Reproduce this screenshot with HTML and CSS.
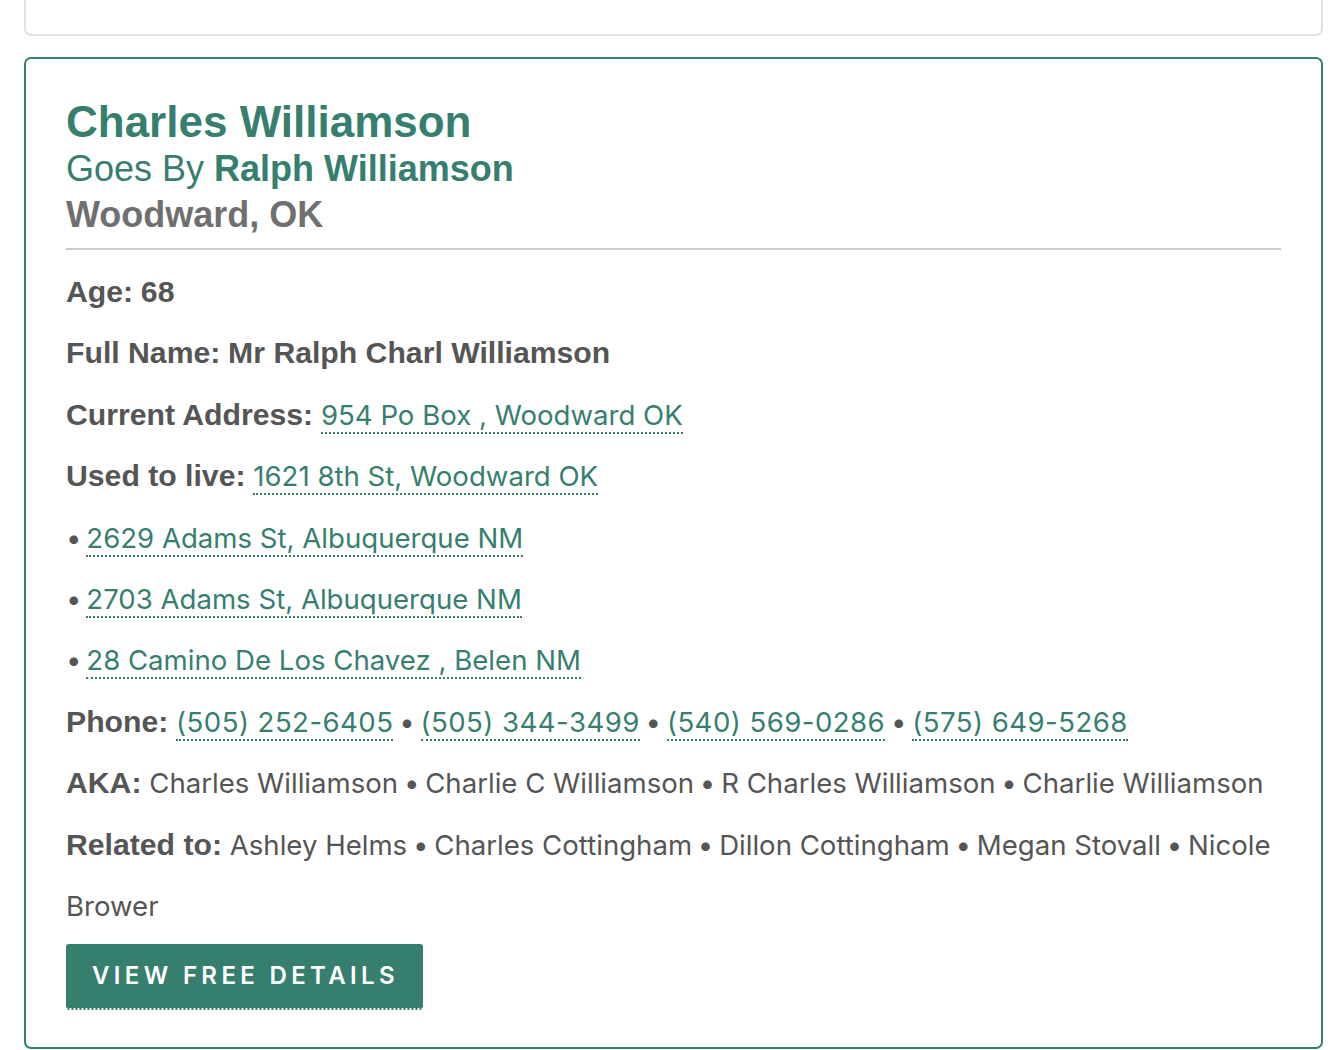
FILE: index.html
```html
<!DOCTYPE html>
<html lang="en">
<head>
<meta charset="utf-8">
<title>Charles Williamson</title>
<link rel="stylesheet" href="styles.css">
</head>
<body>
<div class="page">
  <div class="card card-prev"></div>
  <div class="card card-person">
    <div class="head">
      <h2 class="name">Charles Williamson</h2>
      <div class="goes">Goes By <strong>Ralph Williamson</strong></div>
      <div class="loc">Woodward, OK</div>
    </div>
    <div class="rows">
      <p class="row"><b>Age:</b> <b>68</b></p>
      <p class="row"><b>Full Name:</b> <b>Mr Ralph Charl Williamson</b></p>
      <p class="row"><b>Current Address:</b> <a href="#">954 Po Box , Woodward OK</a></p>
      <p class="row"><b>Used to live:</b> <a href="#">1621 8th St, Woodward OK</a></p>
      <p class="row"><span class="dot">• </span><a href="#">2629 Adams St, Albuquerque NM</a></p>
      <p class="row"><span class="dot">• </span><a href="#">2703 Adams St, Albuquerque NM</a></p>
      <p class="row"><span class="dot">• </span><a href="#">28 Camino De Los Chavez , Belen NM</a></p>
      <p class="row"><b>Phone:</b> <a class="phone" href="#">(505) 252-6405</a><span class="sep"> • </span><a class="phone" href="#">(505) 344-3499</a><span class="sep"> • </span><a class="phone" href="#">(540) 569-0286</a><span class="sep"> • </span><a class="phone" href="#">(575) 649-5268</a></p>
      <p class="row"><b>AKA:</b> Charles Williamson<span class="sep"> • </span>Charlie C Williamson<span class="sep"> • </span>R Charles Williamson<span class="sep"> • </span>Charlie Williamson</p>
      <p class="row"><b>Related to:</b> <span>Ashley Helms</span><span class="sep"> • </span><span>Charles Cottingham</span><span class="sep"> • </span><span>Dillon Cottingham</span><span class="sep"> • </span><span>Megan Stovall</span><span class="sep"> • </span><span>Nicole</span> <span>Brower</span></p>
    </div>
    <a class="btn" href="#">View Free Details</a>
  </div>
</div>
</body>
</html>
```
FILE: styles.css
```css
html, body {
  margin: 0;
  padding: 0;
  background: #fff;
}
body {
  font-family: Inter, "Liberation Sans", Arial, sans-serif;
  color: #555;
}
.page {
  padding: 0 13px 0 24px;
  margin-top: -40px;
  display: flex;
  flex-direction: column;
  gap: 21px;
}
.card {
  border-radius: 7px;
  background: #fff;
}
.card-prev {
  height: 72px;
  border: 2px solid #e1e1e1;
}
.card-person {
  border: 2px solid #367f6f;
  padding: 37px 40px 37px;
}
.head {
  border-bottom: 2px solid #cbcbcb;
  padding-bottom: 8px;
}
.name {
  margin: 0;
  font-family: "Liberation Sans", Arial, sans-serif;
  font-weight: bold;
  font-size: 44px;
  line-height: 52px;
  color: #367f6f;
}
.goes {
  font-family: "Liberation Sans", Arial, sans-serif;
  font-size: 36px;
  line-height: 41px;
  color: #367f6f;
}
.goes strong {
  font-weight: bold;
}
.loc {
  font-family: "Liberation Sans", Arial, sans-serif;
  font-size: 36px;
  line-height: 51px;
  font-weight: bold;
  color: #6f6f6f;
}
.rows {
  padding-top: 12px;
}
.row {
  margin: 0;
  font-size: 27.6px;
  line-height: 61.4px;
}
.row b {
  font-family: "Liberation Sans", Arial, sans-serif;
  font-weight: bold;
  color: #555;
  font-size: 30.2px;
  line-height: 1;
}
.dot {
  color: #555;
  word-spacing: -3px;
}
.sep {
  word-spacing: -2px;
}
.row a {
  color: #367f6f;
  text-decoration: none;
  border-bottom: 2px dotted #367f6f;
  line-height: 1;
}
.row a.phone {
  letter-spacing: 0.45px;
}
.btn {
  display: inline-block;
  margin-top: 7px;
  background: #367f6f;
  color: #fff;
  text-decoration: none;
  text-transform: uppercase;
  font-family: Inter, "Liberation Sans", Arial, sans-serif;
  font-weight: 600;
  font-size: 24px;
  letter-spacing: 4.35px;
  line-height: 64px;
  padding: 0 24px 0 26px;
  border-radius: 3px;
  border-bottom: 2px dotted #fff;
}
```
